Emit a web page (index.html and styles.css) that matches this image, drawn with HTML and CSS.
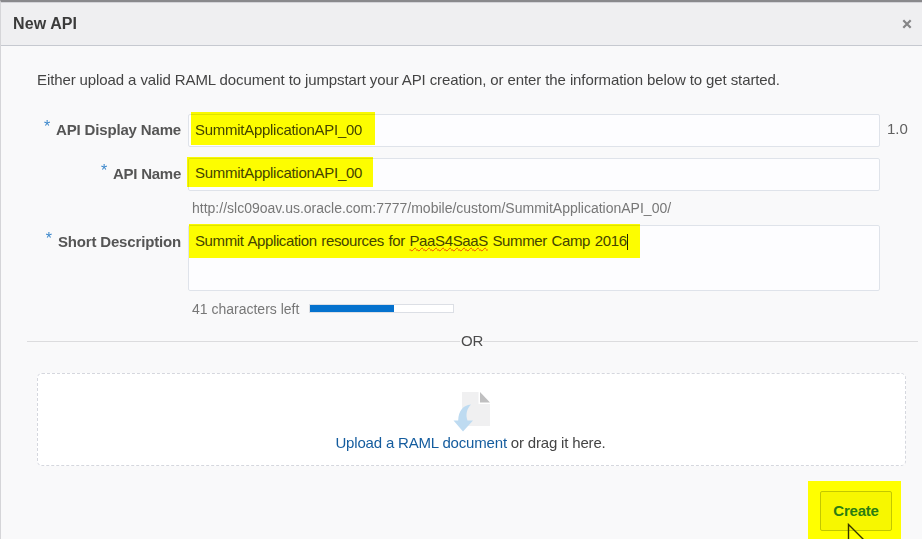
FILE: index.html
```html
<!DOCTYPE html>
<html lang="en">
<head>
<meta charset="utf-8">
<title>New API</title>
<link rel="stylesheet" href="styles.css">
</head>
<body>
<div class="dialog">
  <header class="header">
    <h1 class="title">New API</h1>
    <svg class="close" viewBox="0 0 10 10"><path d="M1.3 1.3 8.7 8.7M8.7 1.3 1.3 8.7"/></svg>
  </header>
  <main class="body">
    <p class="intro">Either upload a valid RAML document to jumpstart your API creation, or enter the information below to get started.</p>
    <div class="row row-display">
      <label class="label"><span class="star">*</span><span>API Display Name</span></label>
      <div class="field"><span class="mark mark-display"></span><span class="value">SummitApplicationAPI_00</span></div>
      <span class="version">1.0</span>
    </div>
    <div class="row row-name">
      <label class="label"><span class="star">*</span><span class="name-text">API Name</span></label>
      <div class="field"><span class="mark mark-name"></span><span class="value">SummitApplicationAPI_00</span></div>
    </div>
    <div class="hint">http://slc09oav.us.oracle.com:7777/mobile/custom/SummitApplicationAPI_00/</div>
    <div class="row row-desc">
      <label class="label"><span class="star">*</span><span>Short Description</span></label>
      <div class="field area"><span class="mark mark-desc"></span><span class="value sentence">Summit Application resources for <span class="misspelt">PaaS4SaaS</span> Summer Camp 2016</span><i class="caret"></i></div>
    </div>
    <div class="counter"><span class="count">41 characters left</span><div class="meter"><div class="fill"></div></div></div>
    <div class="divider"><span class="or">OR</span></div>
    <div class="drop">
      <svg class="doc" viewBox="0 0 38 42">
        <path d="M9 1H25.500V13H37V35H9Z" fill="#f0f0f1"/>
        <path d="M27 1 37 11.500H27Z" fill="#bfbfc0"/>
        <path d="M18 13.500C10 14 5.500 20 5.200 29.500H0.500L10 40.500 20 29.500H14.500C12.500 24 13.500 18 18 13.500Z" fill="#bedbf1"/>
      </svg>
      <p class="drop-text"><a class="link">Upload a RAML document</a> or drag it here.</p>
    </div>
  </main>
  <footer class="footer">
    <div class="create-mark"><button class="create">Create</button>
      <svg class="cursor" viewBox="0 0 18 18"><path d="M1.500 18V1.500L18 18"/></svg>
    </div>
  </footer>
</div>
</body>
</html>
```
FILE: styles.css
```css
* { box-sizing: border-box; }
body {
  margin: 0;
  height: 539px;
  overflow: hidden;
  background: #f9f9fa;
  color: #444;
  font: 15px/18px "Liberation Sans", Arial, sans-serif;
}
.dialog {
  height: 539px;
  border-top: 2px solid #89898c;
  border-left: 1px solid #d5d5d8;
  display: flex;
  flex-direction: column;
}
.header {
  height: 44px;
  flex: none;
  padding: 0 10px 0 12px;
  display: flex;
  align-items: center;
  justify-content: space-between;
  background: #efeff1;
  border-top: 1px solid #d3d3d8;
  border-bottom: 1px solid #c6c9d0;
}
.title { margin: 0; font-size: 16px; line-height: 18px; letter-spacing: 0.1px; color: #3b3b3b; }
.close { width: 10px; height: 10px; fill: none; stroke: #858587; stroke-width: 2.2; }
.body { flex: none; height: 420px; }
.intro { margin: 0; padding: 25px 0 0 36px; height: 68px; letter-spacing: -0.105px; white-space: nowrap; }
.row { display: flex; align-items: flex-start; }
.label {
  width: 180px;
  margin-right: 7px;
  padding-top: 7px;
  display: flex;
  justify-content: flex-end;
  font-weight: bold;
  letter-spacing: -0.16px;
  color: #555;
  white-space: nowrap;
}
.name-text { letter-spacing: -0.25px; }
.star { margin-right: 6px; margin-top: -3px; color: #3b87cb; font-size: 16px; font-weight: normal; }
.field {
  position: relative;
  width: 692px;
  height: 33px;
  padding: 7px 0 0 6px;
  background: #fdfdff;
  border: 1px solid #dfe3ea;
  border-radius: 2px;
  white-space: nowrap;
}
.value { letter-spacing: -0.275px; }
.sentence { letter-spacing: -0.38px; word-spacing: 0.9px; }
.mark { position: absolute; background: #ffff00; mix-blend-mode: multiply; }
.mark-display { left: 2px; top: -3px; width: 184px; height: 33px; }
.mark-name { left: -2px; top: -2px; width: 186px; height: 30px; }
.mark-desc { left: 0; top: -2px; width: 451px; height: 34px; }
.version { margin: 6px 0 0 7px; color: #606060; }
.row-display { height: 44px; }
.row-display .field { padding-top: 6px; }
.row-name { height: 33px; }
.row-name .field { padding-top: 5px; }
.hint { height: 34px; padding: 8px 0 0 191px; font-size: 14px; color: #777; white-space: nowrap; }
.row-desc { height: 66px; }
.row-desc .label { padding-top: 8px; }
.area { height: 66px; padding-top: 6px; }
.misspelt { text-decoration: underline wavy #ee4b00 1px; text-underline-offset: 1px; text-decoration-skip-ink: none; }
.caret { display: inline-block; width: 1px; height: 16px; background: #222; vertical-align: -4px; }
.counter { height: 37px; padding: 0 0 2px 191px; display: flex; align-items: center; font-size: 14px; color: #777; white-space: nowrap; }
.count { width: 117px; }
.meter { width: 145px; height: 9px; background: #fff; border: 1px solid #dcdfe5; }
.fill { width: 84px; height: 7px; background: #0572ce; }
.divider { display: flex; align-items: center; width: 891px; height: 26px; margin-left: 26px; color: #4c4c4c; }
.divider::before, .divider::after { content: ""; flex: 1; height: 1px; background: #dcdcde; }
.divider::before { flex: none; width: 433px; }
.or { margin-left: 1px; letter-spacing: -0.2px; }
.drop {
  width: 869px;
  height: 93px;
  margin: 19px 0 0 36px;
  padding-top: 17px;
  display: flex;
  flex-direction: column;
  align-items: center;
  background: #fff;
  border: 1px dashed #d5d7de;
  border-radius: 5px;
}
.doc { width: 38px; height: 42px; }
.drop-text { margin: 1px 2px 0 0; letter-spacing: -0.18px; white-space: nowrap; }
.link { color: #145c9e; }
.footer { display: flex; justify-content: flex-end; padding: 15px 20px 0 0; height: 73px; }
.create-mark { position: relative; width: 93px; height: 58px; margin-right: 1px; padding: 10px 0 0 12px; background: #ffff00; }
.create {
  width: 72px;
  height: 40px;
  padding: 0;
  background: #f7f700;
  border: 1px solid #c3c800;
  border-radius: 2px;
  color: #2b7d12;
  font: bold 15px/18px "Liberation Sans", Arial, sans-serif;
  letter-spacing: -0.2px;
}
.cursor { position: absolute; left: 39px; top: 42px; width: 18px; height: 18px; fill: none; stroke: #333300; stroke-width: 1.4; }
```
